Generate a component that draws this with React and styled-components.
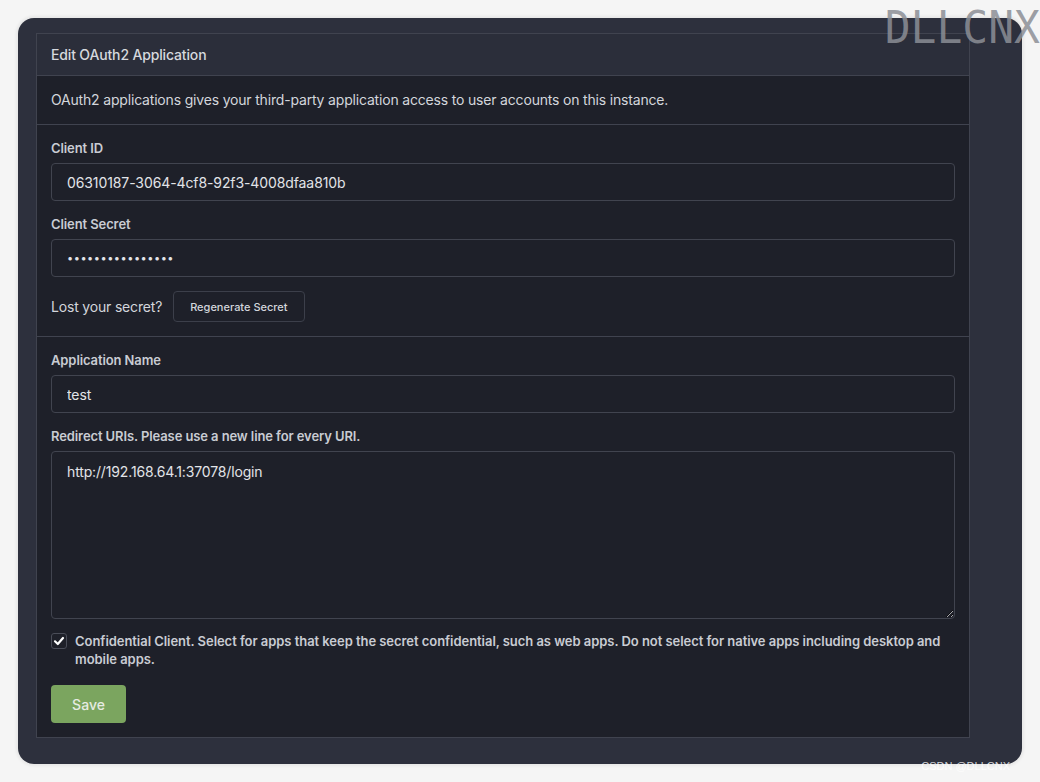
import React from "react";
import styled, { createGlobalStyle } from "styled-components";

const GlobalStyle = createGlobalStyle`
  html, body {
    margin: 0;
    padding: 0;
    background: #f5f5f5;
  }
  body {
    font-family: Inter, "Noto Sans", sans-serif;
    -webkit-font-smoothing: antialiased;
  }
  * {
    box-sizing: border-box;
  }
`;

const Page = styled.div`
  position: relative;
  width: 1040px;
  height: 782px;
  padding: 18px;
`;

const Window = styled.div`
  width: 1004px;
  height: 746px;
  padding: 15px 52px 0 18px;
  background: #2d303d;
  border-radius: 16px;
  box-shadow: 0 0 3px 2px rgba(0, 0, 0, 0.06);
`;

const Card = styled.div`
  border: 1px solid #40434f;
  background: #1e2029;
  color: #d3d6dc;
`;

const CardHeader = styled.div`
  height: 42px;
  display: flex;
  align-items: center;
  padding: 0 14px;
  background: #2b2e3a;
  border-bottom: 1px solid #40434f;
  font-size: 14px;
  font-weight: 500;
  letter-spacing: -0.15px;
  color: #d6d9de;
`;

const Section = styled.div`
  padding: ${(p) => p.$pad || "14px"} 14px ${(p) => p.$padBottom || "14px"};
  border-bottom: ${(p) => (p.$last ? "none" : "1px solid #40434f")};
`;

const Intro = styled.p`
  margin: 0;
  font-size: 14px;
  line-height: 20px;
  letter-spacing: -0.18px;
  color: #d3d6dc;
`;

const Field = styled.div`
  & + & {
    margin-top: 13px;
  }
`;

const Label = styled.label`
  display: block;
  font-size: 13px;
  line-height: 20px;
  font-weight: 600;
  letter-spacing: -0.1px;
  color: #c9ccd3;
  margin-bottom: 5px;
`;

const Input = styled.input`
  display: block;
  width: 100%;
  height: 38px;
  padding: 0 15px;
  background: #1e2029;
  border: 1px solid #41444f;
  border-radius: 4px;
  color: #e2e4e8;
  font-family: inherit;
  font-size: ${(p) => (p.type === "password" ? "11px" : "14px")};
  letter-spacing: ${(p) => (p.type === "password" ? "0.5px" : "-0.1px")};
  outline: none;
`;

const TextArea = styled.textarea`
  display: block;
  width: 100%;
  height: 168px;
  padding: 10px 15px;
  background: #1e2029;
  border: 1px solid #41444f;
  border-radius: 4px;
  color: #e2e4e8;
  font-family: inherit;
  font-size: 14px;
  line-height: 20px;
  letter-spacing: -0.15px;
  outline: none;
  resize: vertical;
`;

const InlineRow = styled.div`
  display: flex;
  align-items: center;
  gap: 11px;
  margin-top: 14px;
  font-size: 14px;
  letter-spacing: -0.18px;
  color: #d3d6dc;
`;

const GhostButton = styled.button`
  height: 31px;
  padding: 0 16px;
  background: #1e2029;
  border: 1px solid #3c3f4a;
  border-radius: 4px;
  color: #d3d6dc;
  font-family: inherit;
  font-size: 11px;
  font-weight: 500;
`;

const CheckRow = styled.label`
  display: flex;
  align-items: flex-start;
  gap: 8px;
  margin-top: 13px;
  font-size: 13px;
  line-height: 18px;
  font-weight: 600;
  letter-spacing: -0.05px;
  color: #c9ccd3;
`;

const Box = styled.span`
  flex: 0 0 16px;
  width: 16px;
  height: 16px;
  margin-top: 1px;
  display: flex;
  align-items: center;
  justify-content: center;
  border: 1px solid #4a4d58;
  border-radius: 3px;
  background: #1e2029;
`;

const SaveButton = styled.button`
  margin-top: 17px;
  width: 75px;
  height: 38px;
  background: #7ba55f;
  border: none;
  border-radius: 4px;
  color: #e6ebe2;
  font-family: inherit;
  font-size: 14px;
  font-weight: 500;
`;

const Watermark = styled.div`
  position: absolute;
  top: 4px;
  right: 0;
  font-family: "DejaVu Sans Mono", monospace;
  font-size: 43px;
  line-height: 46px;
  color: rgba(140, 143, 150, 0.85);
  transform: scaleY(1.05);
`;

const Credit = styled.div`
  position: absolute;
  right: 30px;
  bottom: 10px;
  font-family: "Liberation Sans", sans-serif;
  font-size: 11px;
  color: rgba(255, 255, 255, 0.8);
`;

export default function App() {
  return (
    <>
      <GlobalStyle />
      <Page>
        <Window>
          <Card>
            <CardHeader>Edit OAuth2 Application</CardHeader>
            <Section $pad="14px" $padBottom="14px">
              <Intro>
                OAuth2 applications gives your third-party application access
                to user accounts on this instance.
              </Intro>
            </Section>
            <Section $pad="13px" $padBottom="14px">
              <Field>
                <Label>Client ID</Label>
                <Input readOnly value="06310187-3064-4cf8-92f3-4008dfaa810b" />
              </Field>
              <Field>
                <Label>Client Secret</Label>
                <Input type="password" readOnly value="xxxxxxxxxxxxxxxx" />
              </Field>
              <InlineRow>
                <span>Lost your secret?</span>
                <GhostButton>Regenerate Secret</GhostButton>
              </InlineRow>
            </Section>
            <Section $pad="13px" $padBottom="14px" $last>
              <Field>
                <Label>Application Name</Label>
                <Input readOnly value="test" />
              </Field>
              <Field>
                <Label>Redirect URIs. Please use a new line for every URI.</Label>
                <TextArea readOnly value="http://192.168.64.1:37078/login" />
              </Field>
              <CheckRow>
                <Box>
                  <svg width="12" height="12" viewBox="0 0 12 12">
                    <path
                      d="M2 6.3 L4.8 9 L10 3"
                      fill="none"
                      stroke="#ffffff"
                      strokeWidth="2.2"
                      strokeLinecap="round"
                      strokeLinejoin="round"
                    />
                  </svg>
                </Box>
                <span>
                  Confidential Client. Select for apps that keep the secret
                  confidential, such as web apps. Do not select for native apps
                  including desktop and mobile apps.
                </span>
              </CheckRow>
              <SaveButton>Save</SaveButton>
            </Section>
          </Card>
        </Window>
        <Watermark>DLLCNX</Watermark>
        <Credit>CSDN @DLLCNX</Credit>
      </Page>
    </>
  );
}
